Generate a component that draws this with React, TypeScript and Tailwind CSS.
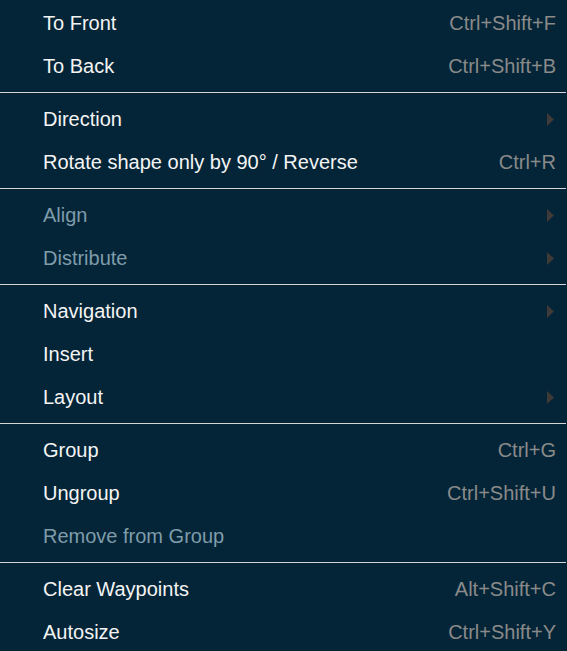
import React from "react";

type Item = {
  label: string;
  shortcut?: string;
  submenu?: boolean;
  disabled?: boolean;
};

const groups: Item[][] = [
  [
    { label: "To Front", shortcut: "Ctrl+Shift+F" },
    { label: "To Back", shortcut: "Ctrl+Shift+B" },
  ],
  [
    { label: "Direction", submenu: true },
    { label: "Rotate shape only by 90° / Reverse", shortcut: "Ctrl+R" },
  ],
  [
    { label: "Align", submenu: true, disabled: true },
    { label: "Distribute", submenu: true, disabled: true },
  ],
  [
    { label: "Navigation", submenu: true },
    { label: "Insert" },
    { label: "Layout", submenu: true },
  ],
  [
    { label: "Group", shortcut: "Ctrl+G" },
    { label: "Ungroup", shortcut: "Ctrl+Shift+U" },
    { label: "Remove from Group", disabled: true },
  ],
  [
    { label: "Clear Waypoints", shortcut: "Alt+Shift+C" },
    { label: "Autosize", shortcut: "Ctrl+Shift+Y" },
  ],
];

const SubmenuArrow = () => (
  <svg width="7" height="13" viewBox="0 0 7 13" className="mr-[2px]">
    <path d="M0 0 L7 6.5 L0 13 Z" fill="#3e3a38" />
  </svg>
);

const MenuRow = ({ item }: { item: Item }) => {
  return (
    <div className="flex h-[43px] items-center justify-between pl-[43px] pr-[11px] pt-[3px]">
      <span className={item.disabled ? "text-[#7f9cab]" : "text-[#f4f4f4]"}>
        {item.label}
      </span>
      {item.shortcut && <span className="text-[#8a8a8a]">{item.shortcut}</span>}
      {item.submenu && <SubmenuArrow />}
    </div>
  );
};

export default function App() {
  return (
    <div className="w-[567px] h-[651px] overflow-hidden bg-[#042537] text-[20px] font-['Liberation_Sans',Arial,sans-serif]">
      {groups.map((group, gi) => (
        <div key={gi}>
          {gi > 0 && <div className="mt-[6px] mb-[3px] h-px w-[566px] bg-[#d4d4d4]" />}
          {group.map((item) => (
            <MenuRow key={item.label} item={item} />
          ))}
        </div>
      ))}
    </div>
  );
}
